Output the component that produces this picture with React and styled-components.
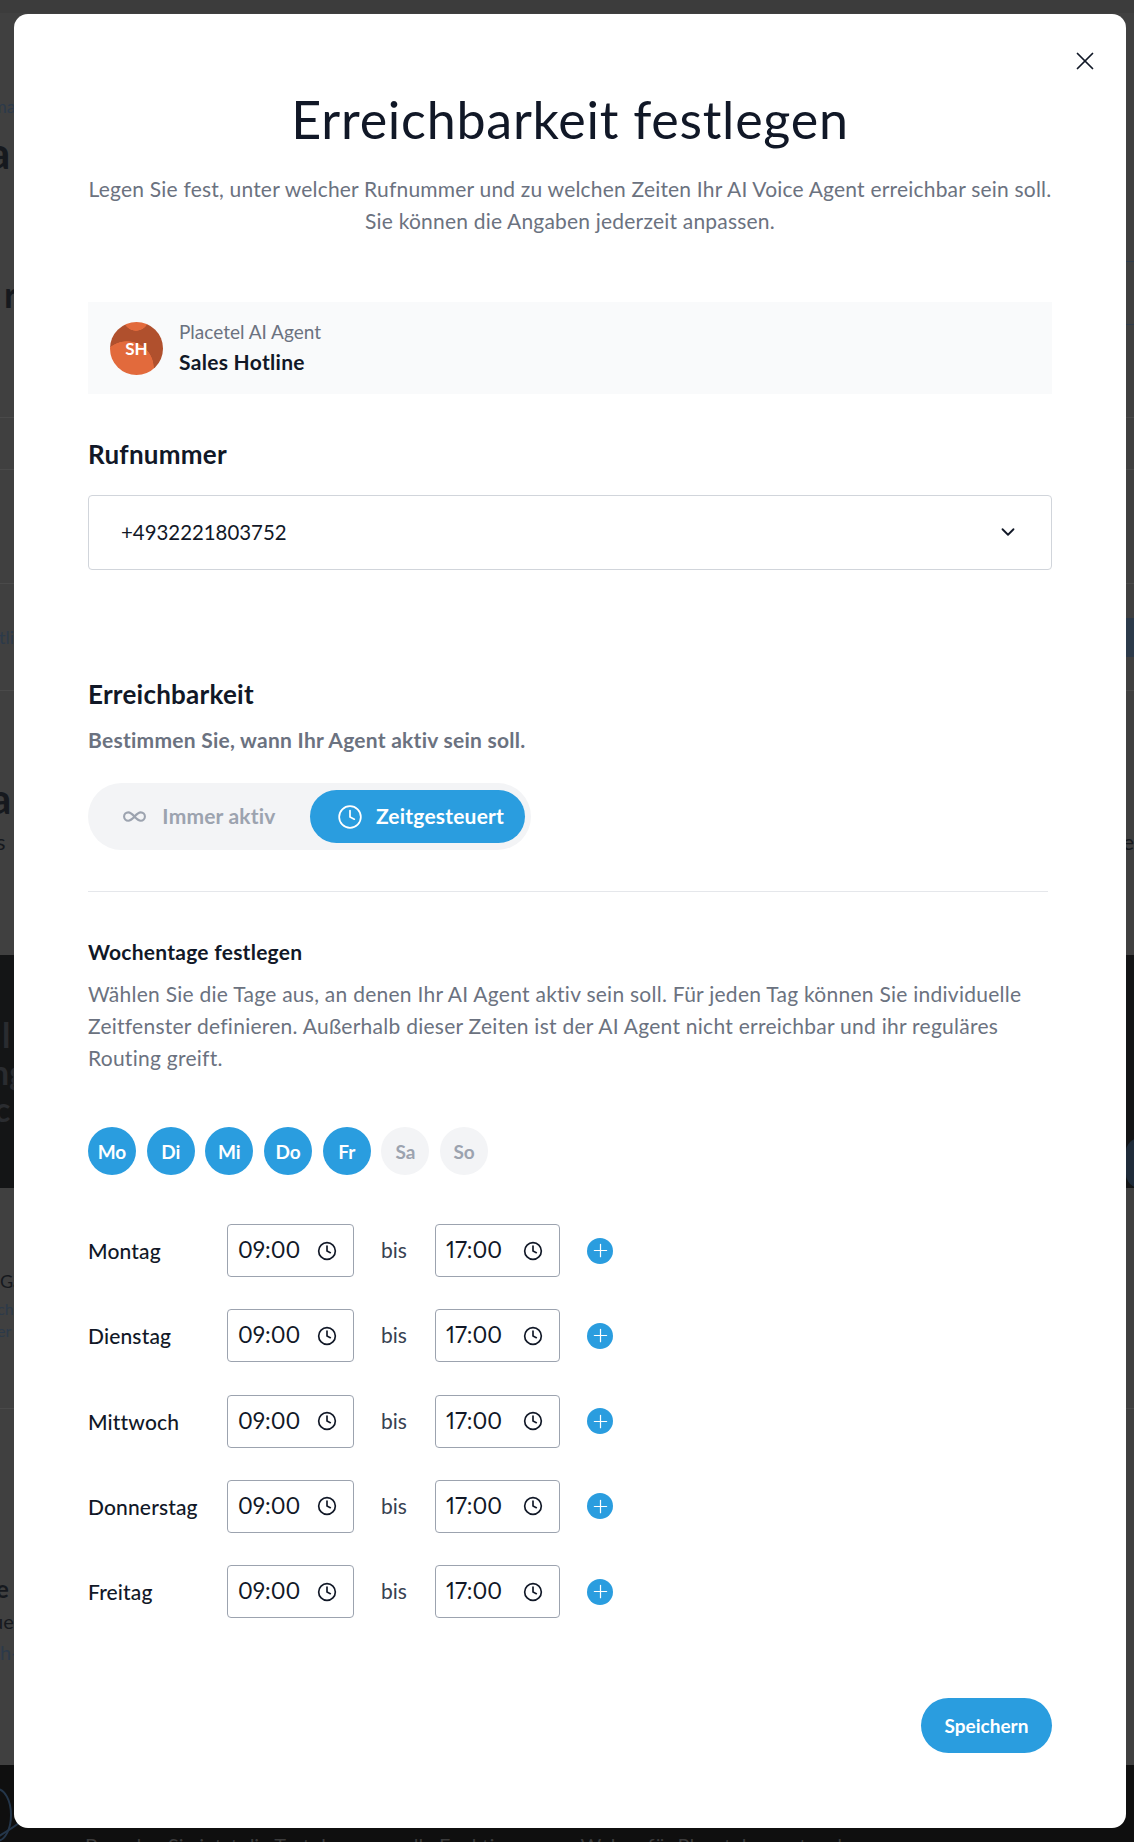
import React from "react";
import styled, { createGlobalStyle } from "styled-components";
import { ChevronDown, Clock, Infinity as InfinityIcon, Plus, X } from "lucide-react";

const BLUE = "#2a9ddf";
const INK = "#111827";
const GREY = "#6b7280";
const FONT = `"Lato", "Liberation Sans", sans-serif`;

const GlobalStyle = createGlobalStyle`
  html, body {
    margin: 0;
    padding: 0;
    height: 1842px;
    overflow: hidden;
    background: #404040;
    font-family: ${FONT};
  }
  * { box-sizing: border-box; }
`;

const Page = styled.div`
  position: relative;
  width: 1134px;
  height: 1842px;
  overflow: hidden;
`;

/* page behind the dialog, only its edges are visible */
const Band = styled.div`
  height: ${(p) => p.$h}px;
  padding-top: ${(p) => p.$pad || 0}px;
  background: ${(p) => p.$bg || "#404040"};
  border-bottom: ${(p) => (p.$line ? `1px solid ${p.$line}` : "none")};
  color: ${(p) => p.$color || "#16191e"};
  display: flex;
  align-items: ${(p) => p.$align || "center"};
  justify-content: space-between;
  font-size: ${(p) => p.$size || 18}px;
  font-weight: ${(p) => p.$weight || 400};
  line-height: 1;
  overflow: hidden;
  white-space: nowrap;
`;

const Fragment = styled.span`
  margin-left: ${(p) => p.$left || 0}px;
  color: ${(p) => p.$color || "inherit"};
  font-size: ${(p) => (p.$size ? `${p.$size}px` : "inherit")};
  line-height: ${(p) => (p.$lh ? `${p.$lh}px` : "inherit")};
`;

const Stack = styled.div`
  display: flex;
  flex-direction: column;
  align-items: flex-start;
`;

const EdgeRule = styled.span`
  align-self: flex-end;
  width: 8px;
  height: 1px;
  margin-left: auto;
  background: #2f3c4c;
`;

const EdgeBlock = styled.span`
  width: 8px;
  height: ${(p) => p.$h}px;
  margin-left: auto;
  background: #2c3a4a;
`;

const EdgeDot = styled.span`
  width: 14px;
  height: 50px;
  margin: 0 -6px 0 auto;
  align-self: flex-end;
  border-radius: 14px 0 0 14px;
  background: #1f2c3a;
`;

const BottomNote = styled.span`
  margin: 70px auto 0 66px;
  color: #3b3b3b;
  font-size: 20px;
`;

const Swirl = styled.svg`
  flex: none;
  margin-left: -17px;
`;

const Modal = styled.div`
  position: absolute;
  top: 14px;
  left: 14px;
  width: 1112px;
  height: 1814px;
  padding: 0 74px 0 74px;
  background: #fff;
  border-radius: 14px;
  color: ${INK};
`;

const CloseButton = styled.button`
  position: absolute;
  top: 32px;
  right: 26px;
  width: 30px;
  height: 30px;
  padding: 0;
  border: 0;
  background: none;
  color: ${INK};
  display: flex;
  align-items: center;
  justify-content: center;
`;

const Title = styled.h1`
  margin: 0;
  padding-top: 71px;
  font-size: 52px;
  line-height: 68px;
  font-weight: 400;
  letter-spacing: 0.75px;
  text-align: center;
`;

const Lead = styled.p`
  margin: 20px 0 0;
  font-size: 21px;
  line-height: 32px;
  letter-spacing: 0.2px;
  color: ${GREY};
  text-align: center;
`;

const AgentCard = styled.div`
  margin-top: 65px;
  height: 92px;
  padding: 0 22px;
  background: #f9fafb;
  display: flex;
  align-items: center;
  gap: 16px;
`;

const Avatar = styled.div`
  width: 53px;
  height: 53px;
  border-radius: 50%;
  background:
    radial-gradient(circle 13px at 26px -4px, #e26a3c 96%, transparent 100%),
    radial-gradient(circle 27px at 17px 46px, #e26a3c 98%, transparent 100%),
    #b0502d;
  color: #fff;
  font-size: 17px;
  font-weight: 700;
  display: flex;
  align-items: center;
  justify-content: center;
`;

const AgentText = styled.div`
  margin-top: -2px;
  display: flex;
  flex-direction: column;
  gap: 8px;
`;

const AgentKind = styled.span`
  font-size: 19px;
  line-height: 22px;
  color: ${GREY};
`;

const AgentName = styled.span`
  font-size: 21px;
  line-height: 22px;
  font-weight: 700;
  letter-spacing: 0.3px;
`;

const SectionTitle = styled.h2`
  margin: ${(p) => p.$top}px 0 0;
  font-size: 26px;
  line-height: 32px;
  font-weight: 700;
  letter-spacing: 0.25px;
`;

const Select = styled.div`
  margin-top: 25px;
  height: 75px;
  padding: 0 32px 2px 32px;
  border: 1px solid #d1d5db;
  border-radius: 4px;
  font-size: 20.4px;
  display: flex;
  align-items: center;
  justify-content: space-between;
`;

const Hint = styled.p`
  margin: 15px 0 0;
  font-size: 21px;
  line-height: 30px;
  font-weight: 700;
  letter-spacing: 0.26px;
  color: ${GREY};
`;

const Toggle = styled.div`
  margin-top: 28px;
  width: 443px;
  height: 67px;
  padding: 7px 6px 7px 7px;
  border-radius: 34px;
  background: #f3f4f6;
  display: grid;
  grid-template-columns: 1fr 215px;
`;

const ToggleOption = styled.div`
  padding: ${(p) => (p.$active ? "0 2px 2px 8px" : "0 7px 2px 0")};
  border-radius: 27px;
  background: ${(p) => (p.$active ? BLUE : "transparent")};
  color: ${(p) => (p.$active ? "#fff" : "#9ca3af")};
  font-size: 21px;
  font-weight: 700;
  letter-spacing: 0.2px;
  display: flex;
  align-items: center;
  justify-content: center;
  gap: ${(p) => (p.$active ? 13 : 15)}px;

  svg {
    margin-top: 2px;
  }
`;

const Divider = styled.hr`
  margin: 41px 4px 0 0;
  border: 0;
  border-top: 1px solid #e5e7eb;
`;

const SubTitle = styled.h3`
  margin: 47px 0 0;
  font-size: 21px;
  line-height: 26px;
  font-weight: 700;
  letter-spacing: 0.25px;
`;

const Body = styled.p`
  margin: 13px 0 0;
  font-size: 21px;
  line-height: 32px;
  letter-spacing: 0.26px;
  color: ${GREY};
`;

const Days = styled.div`
  margin-top: 53px;
  display: flex;
  gap: 10.7px;
`;

const Day = styled.div`
  width: 48px;
  height: 48px;
  border-radius: 50%;
  background: ${(p) => (p.$on ? BLUE : "#f3f4f6")};
  color: ${(p) => (p.$on ? "#fff" : "#9ca3af")};
  font-size: 19px;
  font-weight: 700;
  display: flex;
  align-items: center;
  justify-content: center;
`;

const Rows = styled.div`
  margin-top: 49px;
  display: flex;
  flex-direction: column;
  gap: 32.3px;
`;

const Row = styled.div`
  height: 53px;
  display: grid;
  grid-template-columns: 139px 127px 81px 125px 27px 26px;
  align-items: center;
`;

const DayLabel = styled.span`
  font-size: 21px;
  font-weight: 500;
  letter-spacing: 0.15px;
`;

const TimeBox = styled.div`
  height: 100%;
  padding: 0 16px 2px 10px;
  border: 1px solid #9ca3af;
  border-radius: 4px;
  font-size: 22.5px;
  font-feature-settings: "pnum";
  display: flex;
  align-items: center;
  justify-content: space-between;

  svg {
    margin-top: 2px;
  }
`;

const Until = styled.span`
  padding: 0 0 2px 27px;
  font-size: 21px;
  color: #374151;
`;

const AddButton = styled.button`
  grid-column: 6;
  width: 26px;
  height: 26px;
  padding: 0;
  border: 0;
  border-radius: 50%;
  background: ${BLUE};
  color: #fff;
  display: flex;
  align-items: center;
  justify-content: center;
`;

const Footer = styled.div`
  margin-top: 80px;
  display: flex;
  justify-content: flex-end;
`;

const SaveButton = styled.button`
  width: 131px;
  height: 55px;
  border: 0;
  border-radius: 28px;
  background: ${BLUE};
  color: #fff;
  font-family: ${FONT};
  font-size: 19px;
  font-weight: 700;
`;

const days = [
  { short: "Mo", name: "Montag", on: true },
  { short: "Di", name: "Dienstag", on: true },
  { short: "Mi", name: "Mittwoch", on: true },
  { short: "Do", name: "Donnerstag", on: true },
  { short: "Fr", name: "Freitag", on: true },
  { short: "Sa", on: false },
  { short: "So", on: false },
];

function Backdrop() {
  return (
    <>
      <Band $h={13} $bg="#3c3c3c" />
      <Band $h={105} $color="#2c3a4a" $align="flex-end"><Fragment $left={-8} $lh={24}>ma</Fragment></Band>
      <Band $h={67} $size={44} $weight={700}><Fragment $left={-12}>a</Fragment></Band>
      <Band $h={77}><EdgeRule /></Band>
      <Band $h={63} $size={36} $weight={700}><Fragment $left={4}>r</Fragment><EdgeRule /></Band>
      <Band $h={93} $line="#4a4a4a" />
      <Band $h={52} $line="#4a4a4a" />
      <Band $h={114} $line="#4a4a4a" />
      <Band $h={107} $line="#4a4a4a" $color="#2c3a4a"><Fragment $left={-1}>tli</Fragment><EdgeBlock $h={39} /></Band>
      <Band $h={84} />
      <Band $h={45} $size={42} $weight={700}><Fragment $left={-10}>a</Fragment></Band>
      <Band $h={44} $size={22}><Fragment $left={-4}>s</Fragment><span>e</span></Band>
      <Band $h={91} />
      <Band $h={233} $bg="#141516" $color="#2a2c30" $size={34} $weight={700}>
        <Stack>
          <Fragment $left={2} $lh={37}>l</Fragment>
          <Fragment $left={-10} $lh={37}>ng</Fragment>
          <Fragment $left={-6} $lh={37}>c</Fragment>
        </Stack>
        <EdgeDot />
      </Band>
      <Band $h={221} $line="#4a4a4a" $pad={10}>
        <Stack>
          <Fragment $left={0} $lh={32}>Ga</Fragment>
          <Fragment $left={-3} $size={16} $lh={24} $color="#2c3a4a">ch</Fragment>
          <Fragment $left={-3} $size={16} $lh={20} $color="#2c3a4a">er</Fragment>
        </Stack>
      </Band>
      <Band $h={356} $pad={66}>
        <Stack>
          <Fragment $left={-4} $size={24} $lh={32}><b>e Z</b></Fragment>
          <Fragment $left={-8} $size={20} $lh={32}>ue</Fragment>
          <Fragment $left={0} $size={20} $lh={30} $color="#2c3a4a">h-</Fragment>
        </Stack>
      </Band>
      <Band $h={77} $bg="#0f0f0f" $align="flex-start">
        <Swirl width="36" height="77" viewBox="0 0 36 77" fill="none" stroke="#24364a" strokeWidth="2">
          <ellipse cx="14" cy="50" rx="14" ry="26" />
          <path d="M8 76 C18 70 28 64 36 58" />
        </Swirl>
        <BottomNote>Beenden Sie jetzt die Testphase, um alle Funktionen von Webex für Placetel zu nutzen!</BottomNote>
      </Band>
    </>
  );
}

export default function App() {
  return (
    <Page>
      <GlobalStyle />
      <Backdrop />
      <Modal>
        <CloseButton aria-label="Schließen"><X size={30} strokeWidth={1.4} /></CloseButton>
        <Title>Erreichbarkeit festlegen</Title>
        <Lead>
          Legen Sie fest, unter welcher Rufnummer und zu welchen Zeiten Ihr AI Voice Agent erreichbar sein soll.
          <br />
          Sie können die Angaben jederzeit anpassen.
        </Lead>
        <AgentCard>
          <Avatar>SH</Avatar>
          <AgentText>
            <AgentKind>Placetel AI Agent</AgentKind>
            <AgentName>Sales Hotline</AgentName>
          </AgentText>
        </AgentCard>
        <SectionTitle $top={44}>Rufnummer</SectionTitle>
        <Select>
          +4932221803752
          <ChevronDown size={22} strokeWidth={2} />
        </Select>
        <SectionTitle $top={108}>Erreichbarkeit</SectionTitle>
        <Hint>Bestimmen Sie, wann Ihr Agent aktiv sein soll.</Hint>
        <Toggle>
          <ToggleOption><InfinityIcon size={25} strokeWidth={2} />Immer aktiv</ToggleOption>
          <ToggleOption $active><Clock size={26} strokeWidth={1.6} />Zeitgesteuert</ToggleOption>
        </Toggle>
        <Divider />
        <SubTitle>Wochentage festlegen</SubTitle>
        <Body>
          Wählen Sie die Tage aus, an denen Ihr AI Agent aktiv sein soll. Für jeden Tag können Sie individuelle
          Zeitfenster definieren. Außerhalb dieser Zeiten ist der AI Agent nicht erreichbar und ihr reguläres
          Routing greift.
        </Body>
        <Days>
          {days.map((d) => <Day key={d.short} $on={d.on}>{d.short}</Day>)}
        </Days>
        <Rows>
          {days.filter((d) => d.on).map((d) => (
            <Row key={d.name}>
              <DayLabel>{d.name}</DayLabel>
              <TimeBox>09:00<Clock size={20} strokeWidth={2} /></TimeBox>
              <Until>bis</Until>
              <TimeBox>17:00<Clock size={20} strokeWidth={2} /></TimeBox>
              <AddButton aria-label="Zeitfenster hinzufügen"><Plus size={21} strokeWidth={1.4} /></AddButton>
            </Row>
          ))}
        </Rows>
        <Footer>
          <SaveButton>Speichern</SaveButton>
        </Footer>
      </Modal>
    </Page>
  );
}
